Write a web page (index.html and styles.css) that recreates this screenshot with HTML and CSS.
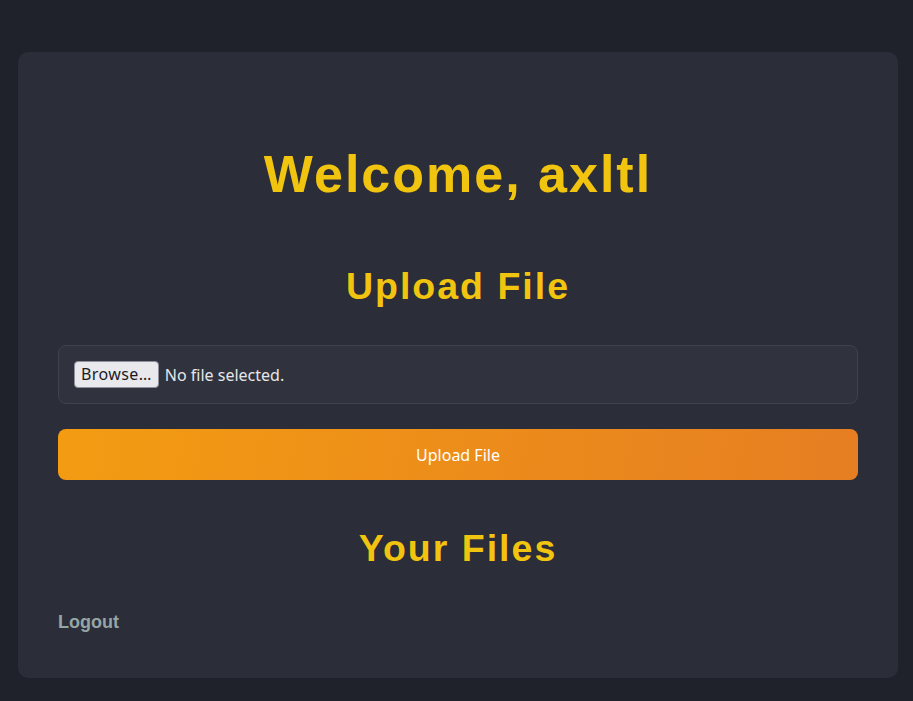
FILE: index.html
```
<!DOCTYPE html>
<html>
<head>
<meta charset="utf-8">
<link rel="stylesheet" href="styles.css">
</head>
<body>
<main class="card">
  <h1 class="title">Welcome, axltl</h1>
  <h2 class="section-title">Upload File</h2>
  <form class="upload-form">
    <div class="file-box">
      <span class="browse-btn">Browse…</span>
      <span class="file-status">No file selected.</span>
    </div>
    <button type="button" class="upload-btn">Upload File</button>
  </form>
  <h2 class="section-title files-title">Your Files</h2>
  <a class="logout" href="#">Logout</a>
</main>
</body>
</html>
```
FILE: styles.css
```
html, body {
  margin: 0;
  padding: 0;
}
body {
  background: #1f222b;
  min-height: 701px;
  padding: 52px 15px 23px 18px;
  box-sizing: border-box;
  font-family: "Liberation Sans", Arial, sans-serif;
}
.card {
  background: #2b2d38;
  border-radius: 10px;
  padding: 92px 40px 44px;
  display: flex;
  flex-direction: column;
  height: 626px;
  box-sizing: border-box;
}
.title {
  margin: 0;
  text-align: center;
  color: #f1c40f;
  font-size: 52px;
  line-height: 60px;
  letter-spacing: 2px;
  font-weight: bold;
}
.section-title {
  margin: 0;
  text-align: center;
  color: #f1c40f;
  font-size: 37.5px;
  line-height: 42px;
  letter-spacing: 2px;
  font-weight: bold;
}
.title + .section-title {
  margin-top: 61px;
}
.upload-form {
  display: flex;
  flex-direction: column;
  gap: 25px;
  margin-top: 38px;
}
.file-box {
  display: flex;
  align-items: center;
  height: 59px;
  box-sizing: border-box;
  padding: 0 15px;
  border: 1px solid #3f424c;
  border-radius: 8px;
  background: #30333e;
  font-family: "Noto Sans", sans-serif;
  font-size: 16px;
}
.browse-btn {
  display: inline-block;
  background: #e9e9ed;
  color: #1b1b1f;
  border: 1px solid #8f8f9d;
  border-radius: 4px;
  padding: 0 6px;
  height: 27px;
  line-height: 25px;
  box-sizing: border-box;
  margin-right: 6px;
  letter-spacing: 0.4px;
}
.file-status {
  color: #e6e6ea;
}
.upload-btn {
  height: 51px;
  border: none;
  border-radius: 8px;
  background: linear-gradient(100deg, #f39c12, #e67e22);
  color: #fff;
  font-family: "Noto Sans", sans-serif;
  font-size: 16px;
  padding: 0;
}
.files-title {
  margin-top: 47px;
}
.logout {
  margin-top: 43px;
  align-self: flex-start;
  color: #95a5a6;
  font-weight: bold;
  font-size: 18px;
  text-decoration: none;
}
```
